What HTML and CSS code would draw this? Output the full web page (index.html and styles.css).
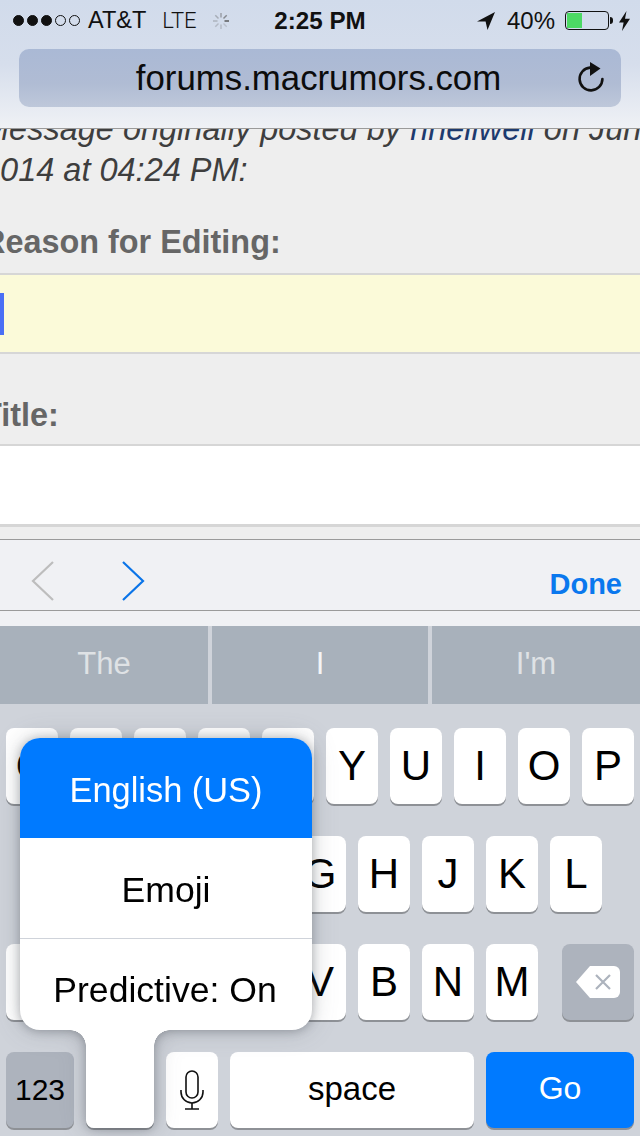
FILE: index.html
```html
<!DOCTYPE html>
<html lang="en">

<head>
    <meta charset="UTF-8">
    <meta name="viewport" content="width=device-width, initial-scale=1.0">
    <title>Edit post</title>
    <link rel="stylesheet" href="styles.css">
</head>

<body>
    <div class="phone">
        <header class="browser-bar">
            <div class="status-bar">
                <div class="status-left">
                    <div class="signal">
                        <span class="dot on"></span>
                        <span class="dot on"></span>
                        <span class="dot on"></span>
                        <span class="dot"></span>
                        <span class="dot"></span>
                    </div>
                    <span class="carrier">AT&amp;T</span>
                    <span class="network">LTE</span>
                    <svg class="spinner" width="18" height="18" viewBox="0 0 18 18" stroke="#555" stroke-width="1.5">
                        <line x1="9" y1="1" x2="9" y2="5.5" opacity=".45" />
                        <line x1="14.7" y1="3.3" x2="11.5" y2="6.5" opacity=".6" />
                        <line x1="17" y1="9" x2="12.5" y2="9" opacity=".95" />
                        <line x1="14.7" y1="14.7" x2="11.5" y2="11.5" opacity=".2" />
                        <line x1="9" y1="17" x2="9" y2="12.5" opacity=".25" />
                        <line x1="3.3" y1="14.7" x2="6.5" y2="11.5" opacity=".25" />
                        <line x1="1" y1="9" x2="5.5" y2="9" opacity=".3" />
                        <line x1="3.3" y1="3.3" x2="6.5" y2="6.5" opacity=".35" />
                    </svg>
                </div>
                <div class="clock">2:25 PM</div>
                <div class="status-right">
                    <svg class="location" width="18" height="18" viewBox="0 0 18 18">
                        <path d="M18 0 L0 9.5 L8.6 9.6 L10.5 18 Z" fill="#111" />
                    </svg>
                    <span class="percent">40%</span>
                    <div class="battery">
                        <div class="battery-level"></div>
                    </div>
                    <div class="battery-tip"></div>
                    <svg class="bolt" width="11" height="20" viewBox="0 0 11 20">
                        <path d="M7.5 0 L0 11.5 L4.6 11.5 L3 20 L11 7.8 L6 7.8 Z" fill="#111" />
                    </svg>
                </div>
            </div>
            <div class="url-bar">
                <span class="url">forums.macrumors.com</span>
                <svg class="reload" width="28" height="32" viewBox="0 0 28 32" fill="none">
                    <path d="M13 6.6 A11.4 11.4 0 1 0 25.4 18" stroke="#111" stroke-width="2.6" stroke-linecap="round" />
                    <path d="M13 1 L23.5 7.5 L13 15 Z" fill="#111" />
                </svg>
            </div>
        </header>

        <main class="page">
            <p class="quote-note">Message originally posted by <a href="#">rlneilwell</a> on June 2014 at 04:24 PM:</p>
            <label class="field-label reason-label">Reason for Editing:</label>
            <div class="text-field focused"><span class="caret"></span></div>
            <label class="field-label title-label">Title:</label>
            <div class="text-field plain"></div>
        </main>

        <div class="form-toolbar">
            <svg class="chevron" width="24" height="42" viewBox="0 0 24 42" fill="none" stroke="#bdbdbd" stroke-width="2.2">
                <path d="M22 2 L2 21 L22 40" />
            </svg>
            <svg class="chevron next" width="24" height="42" viewBox="0 0 24 42" fill="none" stroke="#0a74e8" stroke-width="2.2">
                <path d="M2 2 L22 21 L2 40" />
            </svg>
            <span class="done">Done</span>
        </div>

        <div class="keyboard-top">
            <div class="suggestions">
                <div class="suggestion">The</div>
                <div class="suggestion current">I</div>
                <div class="suggestion">I'm</div>
            </div>
        </div>

        <div class="keyboard">
            <div class="key-row">
                <div class="key">Q</div>
                <div class="key"></div>
                <div class="key"></div>
                <div class="key"></div>
                <div class="key"></div>
                <div class="key">Y</div>
                <div class="key">U</div>
                <div class="key">I</div>
                <div class="key">O</div>
                <div class="key">P</div>
            </div>
            <div class="key-row middle">
                <div class="key"></div>
                <div class="key"></div>
                <div class="key"></div>
                <div class="key"></div>
                <div class="key">G</div>
                <div class="key">H</div>
                <div class="key">J</div>
                <div class="key">K</div>
                <div class="key">L</div>
            </div>
            <div class="key-row">
                <div class="key shift"></div>
                <div class="key"></div>
                <div class="key"></div>
                <div class="key"></div>
                <div class="key">V</div>
                <div class="key">B</div>
                <div class="key">N</div>
                <div class="key">M</div>
                <div class="key delete">
                    <svg width="44" height="32" viewBox="0 0 44 32">
                        <path d="M14 0 H38 A6 6 0 0 1 44 6 V26 A6 6 0 0 1 38 32 H14 L0 16 Z" fill="#fff" />
                        <path d="M20 9 L34 23 M34 9 L20 23" stroke="#adb3bd" stroke-width="2.2" />
                    </svg>
                </div>
            </div>
            <div class="key-row">
                <div class="key dark wide small">123</div>
                <div class="key wide globe-slot"></div>
                <div class="key">
                    <svg width="24" height="40" viewBox="0 0 24 40" fill="none" stroke="#111" stroke-width="1.6">
                        <rect x="6" y="1" width="12" height="27" rx="6" />
                        <path d="M1 20 V22 A11 11 0 0 0 23 22 V20" />
                        <path d="M12 33 V39 M5 39 H19" />
                    </svg>
                </div>
                <div class="key space">space</div>
                <div class="key go">Go</div>
            </div>

            <div class="language-menu">
                <div class="menu-panel">
                    <div class="menu-item selected">English (US)</div>
                    <div class="menu-item">Emoji</div>
                    <div class="menu-item last">Predictive: On</div>
                </div>
                <div class="menu-tail"></div>
            </div>
        </div>
    </div>
</body>

</html>
```

FILE: styles.css
```css
* {
    box-sizing: border-box;
    font-family: "Liberation Sans", Arial, sans-serif;
}

body {
    margin: 0;
    background-color: #eeeeee;
}

.phone {
    display: flex;
    flex-direction: column;
    width: 640px;
    height: 1136px;
    overflow: hidden;
}

/* Safari bar */
.browser-bar {
    flex: none;
    height: 129px;
    padding-bottom: 21px;
    background: linear-gradient(#d1dbeb, #d6deec 50%, #eff1f5);
    border-bottom: 1px solid #9a9a9a;
}

.status-bar {
    display: grid;
    grid-template-columns: 1fr auto 1fr;
    align-items: center;
    height: 40px;
    margin-bottom: 9px;
    padding: 1px 10px 0 13px;
    color: #111111;
    font-size: 24px;
}

.status-left,
.status-right {
    display: flex;
    align-items: center;
}

.status-right {
    justify-content: flex-end;
}

.signal {
    display: flex;
    gap: 3px;
    margin-right: 8px;
}

.dot {
    width: 11px;
    height: 11px;
    border: 1px solid #111111;
    border-radius: 50%;
}

.dot.on {
    background-color: #111111;
}

.carrier {
    font-size: 23.5px;
}

.network {
    margin-left: 16px;
    font-family: Roboto, sans-serif;
    font-size: 22px;
    font-weight: 300;
}

.spinner {
    margin-left: 15px;
}

.clock {
    margin-left: -3px;
    font-size: 24.2px;
    font-weight: bold;
}

.percent {
    margin-left: 12px;
    margin-right: 10px;
}

.battery {
    width: 44px;
    height: 19px;
    padding: 1px;
    border: 1px solid #111111;
    border-radius: 4px;
}

.battery-level {
    width: 15px;
    height: 100%;
    background-color: #4cd964;
}

.battery-tip {
    width: 3px;
    height: 7px;
    margin: 0 6px 0 1px;
    background-color: #111111;
    border-radius: 0 3px 3px 0;
}

.url-bar {
    position: relative;
    display: flex;
    justify-content: center;
    align-items: center;
    height: 58px;
    margin: 0 19px;
    background: linear-gradient(#aab9d5, #b0bcd4 60%, #bec8da);
    border-radius: 10px;
}

.url {
    margin-left: -3px;
    color: #0c0c0c;
    font-size: 34.8px;
}

.reload {
    position: absolute;
    top: 12px;
    right: 16px;
}

/* Page behind the keyboard */
.page {
    flex: none;
    height: 410px;
    margin-left: -18px;
    overflow: hidden;
    color: #666666;
}

.quote-note {
    margin: -20px 0 0;
    width: 700px;
    color: #3e3e3e;
    font-size: 32.5px;
    font-style: italic;
    line-height: 41px;
}

.quote-note a {
    color: #1d3a6e;
    text-decoration: none;
}

.field-label {
    display: block;
    font-size: 32.4px;
    font-weight: bold;
    line-height: 40px;
}

.reason-label {
    margin-top: 31px;
    margin-bottom: 11px;
}

.title-label {
    margin-top: 41px;
    margin-bottom: 9px;
}

.text-field {
    display: flex;
    align-items: center;
    height: 81px;
    padding-left: 14px;
    background-color: #ffffff;
    border-top: 2px solid #d6d6d6;
    border-bottom: 2px solid #d6d6d6;
}

.text-field.plain {
    height: 83px;
    border-bottom-width: 3px;
}

.text-field.focused {
    background-color: #fbfad9;
}

.caret {
    width: 8px;
    height: 42px;
    background-color: #4a6ff5;
}

/* Prev / next / done */
.form-toolbar {
    flex: none;
    display: flex;
    align-items: center;
    height: 72px;
    padding: 12px 18px 0 31px;
    background-color: #f0f1f4;
    border-top: 1px solid #9a9a9a;
    border-bottom: 1px solid #9a9a9a;
}

.chevron.next {
    margin-left: 66px;
}

.done {
    margin-left: auto;
    padding-top: 6px;
    color: #0a78ee;
    font-size: 29px;
    font-weight: bold;
}

.keyboard-top {
    flex: none;
    padding-top: 15px;
    background-color: #f0f1f4;
}

.suggestions {
    display: grid;
    grid-template-columns: 208px 216px 208px;
    gap: 4px;
    height: 78px;
    background-color: #cfd3da;
}

.suggestion {
    display: flex;
    justify-content: center;
    align-items: center;
    padding-bottom: 3px;
    color: #dfe2e5;
    font-size: 31px;
    background-color: #a8b1bb;
}

.suggestion.current {
    color: #f4f5f6;
}

/* Keyboard */
.keyboard {
    position: relative;
    flex: 1;
    display: flex;
    flex-direction: column;
    gap: 32px;
    padding: 24px 6px 0;
    background-color: #cfd3da;
}

.key-row {
    display: flex;
    gap: 12px;
}

.key-row.middle {
    padding-left: 32px;
}

.key {
    flex: none;
    display: flex;
    justify-content: center;
    align-items: center;
    width: 52px;
    height: 76px;
    color: #000000;
    font-size: 42px;
    background-color: #ffffff;
    border-radius: 8px;
    box-shadow: 0 2px 0 #8e9196;
}

.key.shift {
    width: 68px;
    margin-right: 16px;
}

.key.delete {
    width: 72px;
    margin-left: 12px;
    background-color: #adb3bd;
}

.key.wide {
    width: 68px;
}

.key.dark {
    background-color: #adb3bd;
}

.key.small {
    font-size: 30px;
}

.key.space {
    width: 244px;
    padding-bottom: 3px;
    font-size: 33px;
}

.key.go {
    width: 148px;
    padding-bottom: 3px;
    color: #ffffff;
    font-size: 32px;
    background-color: #007aff;
}

/* Language popup sits over the first keys */
.language-menu {
    position: absolute;
    top: 34px;
    left: 20px;
    width: 292px;
    filter: drop-shadow(0 1px 5px rgba(60, 65, 75, 0.35)) drop-shadow(0 0 12px rgba(60, 65, 75, 0.22));
}

.menu-panel {
    height: 292px;
    overflow: hidden;
    background-color: #ffffff;
    border-radius: 20px;
}

.menu-item {
    display: flex;
    justify-content: center;
    align-items: center;
    height: 101px;
    padding-top: 4px;
    color: #000000;
    font-size: 35.6px;
    border-bottom: 1px solid #cfd3da;
}

.menu-item.selected {
    height: 100px;
    color: #ffffff;
    font-size: 34.4px;
    background-color: #007aff;
    border-bottom: none;
}

.menu-item.last {
    padding-top: 2px;
    padding-right: 2px;
    border-bottom: none;
}

.menu-tail {
    position: relative;
    width: 68px;
    height: 98px;
    margin-left: 66px;
    background-color: #ffffff;
    border-radius: 0 0 8px 8px;
}

.menu-tail:before,
.menu-tail:after {
    position: absolute;
    content: "";
    top: 0;
    width: 16px;
    height: 16px;
}

.menu-tail:before {
    left: -16px;
    background: radial-gradient(circle at 0 100%, transparent 15.5px, #ffffff 16px);
}

.menu-tail:after {
    right: -16px;
    background: radial-gradient(circle at 100% 100%, transparent 15.5px, #ffffff 16px);
}
```
